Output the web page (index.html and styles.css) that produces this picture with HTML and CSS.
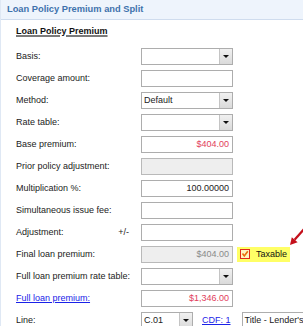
FILE: index.html
```html
<!DOCTYPE html>
<html lang="en">

<head>
  <meta charset="UTF-8" />
  <title>Loan Policy Premium and Split</title>
  <link rel="stylesheet" href="styles.css">
</head>

<body>
  <div class="panel">
    <div class="panel-header">Loan Policy Premium and Split</div>
    <div class="panel-body">
      <h3 class="section-title">Loan Policy Premium</h3>

      <div class="row">
        <label>Basis:</label>
        <div class="select"><span class="value"></span><span class="btn"></span></div>
      </div>
      <div class="row">
        <label>Coverage amount:</label>
        <div class="input"></div>
      </div>
      <div class="row">
        <label>Method:</label>
        <div class="select"><span class="value">Default</span><span class="btn"></span></div>
      </div>
      <div class="row">
        <label>Rate table:</label>
        <div class="select"><span class="value"></span><span class="btn"></span></div>
      </div>
      <div class="row">
        <label>Base premium:</label>
        <div class="input num red">$404.00</div>
      </div>
      <div class="row">
        <label>Prior policy adjustment:</label>
        <div class="input disabled"></div>
      </div>
      <div class="row">
        <label>Multiplication %:</label>
        <div class="input num">100.00000</div>
      </div>
      <div class="row">
        <label>Simultaneous issue fee:</label>
        <div class="input"></div>
      </div>
      <div class="row">
        <label class="split-label"><span>Adjustment:</span><span class="pm">+/-</span></label>
        <div class="input"></div>
      </div>
      <div class="row">
        <label>Final loan premium:</label>
        <div class="input num disabled grey">$404.00</div>
        <div class="taxable">
          <svg class="check" width="10" height="10" viewBox="0 0 10 10">
            <rect x="0.5" y="0.5" width="9" height="9" fill="#fff6c0" stroke="#e02a1c" />
            <polyline points="2.5,4.5 4.3,7 7.8,2.2" fill="none" stroke="#e8700a" stroke-width="1.6" />
          </svg>
          <span>Taxable</span>
        </div>
        <svg class="arrow" width="20" height="24" viewBox="0 0 20 24">
          <line x1="20" y1="2" x2="9.6" y2="13.7" stroke="#c4101c" stroke-width="2.2" />
          <polygon points="5,19 12.6,16.2 6.8,11.2" fill="#c4101c" />
        </svg>
      </div>
      <div class="row">
        <label>Full loan premium rate table:</label>
        <div class="select"><span class="value"></span><span class="btn"></span></div>
      </div>
      <div class="row">
        <label><a href="#">Full loan premium:</a></label>
        <div class="input num red">$1,346.00</div>
      </div>
      <div class="row">
        <label>Line:</label>
        <div class="select small"><span class="value">C.01</span><span class="btn"></span></div>
        <a class="cdf" href="#">CDF: 1</a>
        <div class="input wide">Title - Lender's Title Insurance</div>
      </div>
    </div>
  </div>
</body>

</html>
```

FILE: styles.css
```css
body {
  margin: 0;
  font-family: "Liberation Sans", Arial, sans-serif;
  font-size: 9px;
  color: #222;
  background-color: #fff;
  overflow: hidden;
}

.panel {
  width: 303px;
  height: 326px;
  border-left: 1px solid #dfe8f4;
  box-sizing: border-box;
  position: relative;
  overflow: hidden;
}

.panel-header {
  height: 19px;
  line-height: 19px;
  padding-left: 6px;
  background-color: #eef4fc;
  border-bottom: 1px solid #cfdcee;
  color: #3f72ac;
  font-weight: bold;
  font-size: 9.3px;
}

.panel-body {
  padding: 5px 0 0 15px;
}

.section-title {
  margin: 0 0 8px 0;
  font-size: 9px;
  line-height: 12px;
  color: #111;
  text-decoration: underline;
  text-decoration-color: #7a7a7a;
  text-decoration-thickness: 2px;
  text-underline-offset: 1px;
}

.row {
  display: flex;
  align-items: center;
  height: 22px;
  white-space: nowrap;
}

.row label {
  width: 125px;
  flex: none;
}

.split-label {
  display: flex;
  justify-content: space-between;
}

.split-label .pm {
  margin-right: 12px;
}

.row a {
  color: #1a22e8;
  text-decoration: underline;
}

.input,
.select {
  width: 92px;
  height: 17px;
  box-sizing: border-box;
  border: 1px solid #adadad;
  background-color: #fff;
  line-height: 15px;
  padding: 0 2px;
  flex: none;
  overflow: hidden;
}

.input.num {
  text-align: right;
  padding-right: 3px;
}

.input.red {
  color: #e2405c;
}

.input.disabled {
  background-color: #eeeeee;
  border-color: #b9b9b9;
}

.input.grey {
  color: #8a8a8a;
}

.select {
  display: flex;
  padding: 0;
}

.select .value {
  flex: 1;
  padding-left: 2px;
}

.select .btn {
  width: 12px;
  border-left: 1px solid #c4c4c4;
  background: linear-gradient(#f1f1f1, #dadada);
  display: flex;
  align-items: center;
  justify-content: center;
}

.select .btn::after {
  content: "";
  border-left: 3px solid transparent;
  border-right: 3px solid transparent;
  border-top: 3px solid #111;
  margin-top: 1px;
}

.select.small {
  width: 52px;
}

.cdf {
  margin-left: 9px;
}

.input.wide {
  width: 66px;
  margin-left: 11px;
  padding-left: 2px;
  text-overflow: clip;
}

.taxable {
  display: flex;
  align-items: center;
  height: 15px;
  margin-left: 4px;
  padding: 0 3px;
  background-color: #ffff66;
  color: #111;
}

.taxable .check {
  margin-right: 6px;
}

.arrow {
  position: absolute;
  left: 284px;
  top: 226px;
}
```
